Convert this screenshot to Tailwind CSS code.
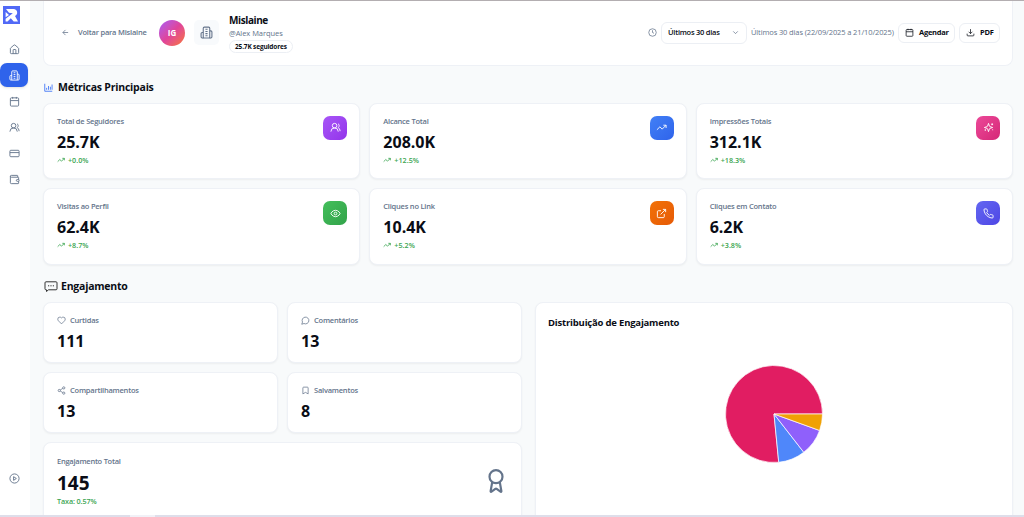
<!DOCTYPE html>
<html lang="pt-BR">
<head>
  <meta charset="UTF-8">
  <meta name="viewport" content="width=device-width, initial-scale=1.0">
  <title>Métricas</title>
  <script src="https://cdn.jsdelivr.net/npm/@tailwindcss/browser@4"></script>
</head>
<body class="relative flex h-[517px] w-[1024px] overflow-hidden bg-[#f8fafb] font-['Open_Sans','Noto_Sans',sans-serif] text-[#0a0d16]">

  <!-- icon sprite -->
  <svg class="hidden">
    <symbol id="home" viewBox="0 0 24 24"><path d="M15 21v-8a1 1 0 0 0-1-1h-4a1 1 0 0 0-1 1v8"/><path d="M3 10a2 2 0 0 1 .709-1.528l7-5.999a2 2 0 0 1 2.582 0l7 5.999A2 2 0 0 1 21 10v9a2 2 0 0 1-2 2H5a2 2 0 0 1-2-2z"/></symbol>
    <symbol id="building" viewBox="0 0 24 24"><path d="M6 22V4a2 2 0 0 1 2-2h8a2 2 0 0 1 2 2v18Z"/><path d="M6 12H4a2 2 0 0 0-2 2v6a2 2 0 0 0 2 2h2"/><path d="M18 9h2a2 2 0 0 1 2 2v9a2 2 0 0 1-2 2h-2"/><path d="M10 6h4M10 10h4M10 14h4M10 18h4"/></symbol>
    <symbol id="calendar" viewBox="0 0 24 24"><path d="M8 2v4M16 2v4M3 10h18"/><rect width="18" height="18" x="3" y="4" rx="2"/></symbol>
    <symbol id="users" viewBox="0 0 24 24"><path d="M18 21a8 8 0 0 0-16 0"/><circle cx="10" cy="8" r="5"/><path d="M22 20c0-3.37-2-6.5-4-8a5 5 0 0 0-.45-8.3"/></symbol>
    <symbol id="card" viewBox="0 0 24 24"><rect width="20" height="14" x="2" y="5" rx="2"/><path d="M2 10h20"/></symbol>
    <symbol id="wallet" viewBox="0 0 24 24"><path d="M19 7V4a1 1 0 0 0-1-1H5a2 2 0 0 0 0 4h15a1 1 0 0 1 1 1v4h-3a2 2 0 0 0 0 4h3a1 1 0 0 0 1-1v-2a1 1 0 0 0-1-1"/><path d="M3 5v14a2 2 0 0 0 2 2h15a1 1 0 0 0 1-1v-4"/></symbol>
    <symbol id="play" viewBox="0 0 24 24"><circle cx="12" cy="12" r="10"/><path d="m10 8 6 4-6 4z"/></symbol>
    <symbol id="arrow-left" viewBox="0 0 24 24"><path d="m12 19-7-7 7-7M19 12H5"/></symbol>
    <symbol id="clock" viewBox="0 0 24 24"><circle cx="12" cy="12" r="10"/><path d="M12 6v6l4 2"/></symbol>
    <symbol id="chevron" viewBox="0 0 24 24"><path d="m6 9 6 6 6-6"/></symbol>
    <symbol id="download" viewBox="0 0 24 24"><path d="M21 15v4a2 2 0 0 1-2 2H5a2 2 0 0 1-2-2v-4M7 10l5 5 5-5M12 15V3"/></symbol>
    <symbol id="chart" viewBox="0 0 24 24"><path d="M2 2v20h20M7 18v-5M12 18V8M17 18v-8M21.500 18V4"/></symbol>
    <symbol id="trend" viewBox="0 0 24 24"><path d="m22 7-8.500 8.500-5-5L2 17"/><path d="M16 7h6v6"/></symbol>
    <symbol id="sparkles" viewBox="0 0 24 24"><path d="m12 3-1.912 5.813a2 2 0 0 1-1.275 1.275L3 12l5.813 1.912a2 2 0 0 1 1.275 1.275L12 21l1.912-5.813a2 2 0 0 1 1.275-1.275L21 12l-5.813-1.912a2 2 0 0 1-1.275-1.275L12 3Z"/><path d="M5 16v3M20 3v4M18 5h4M4 17.500h2M21 16v2"/></symbol>
    <symbol id="eye" viewBox="0 0 24 24"><path d="M2 12s3-7 10-7 10 7 10 7-3 7-10 7-10-7-10-7Z"/><circle cx="12" cy="12" r="3"/></symbol>
    <symbol id="external" viewBox="0 0 24 24"><path d="M15 3h6v6M10 14 21 3M18 13v6a2 2 0 0 1-2 2H5a2 2 0 0 1-2-2V8a2 2 0 0 1 2-2h6"/></symbol>
    <symbol id="phone" viewBox="0 0 24 24"><path d="M22 16.920v3a2 2 0 0 1-2.180 2 19.790 19.790 0 0 1-8.630-3.070 19.500 19.500 0 0 1-6-6 19.790 19.790 0 0 1-3.070-8.670A2 2 0 0 1 4.110 2h3a2 2 0 0 1 2 1.720 12.840 12.840 0 0 0 .7 2.810 2 2 0 0 1-.45 2.110L8.090 9.910a16 16 0 0 0 6 6l1.270-1.270a2 2 0 0 1 2.110-.45 12.840 12.840 0 0 0 2.810.7A2 2 0 0 1 22 16.920z"/></symbol>
    <symbol id="heart" viewBox="0 0 24 24"><path d="M19 14c1.490-1.460 3-3.210 3-5.500A5.500 5.500 0 0 0 16.500 3c-1.760 0-3 .5-4.500 2-1.500-1.500-2.740-2-4.500-2A5.500 5.500 0 0 0 2 8.500c0 2.300 1.500 4.050 3 5.500l7 7Z"/></symbol>
    <symbol id="comment" viewBox="0 0 24 24"><path d="M7.900 20A9 9 0 1 0 4 16.100L2 22Z"/></symbol>
    <symbol id="share" viewBox="0 0 24 24"><circle cx="18" cy="5" r="3"/><circle cx="6" cy="12" r="3"/><circle cx="18" cy="19" r="3"/><path d="m8.590 13.510 6.830 3.980M15.410 6.510l-6.820 3.980"/></symbol>
    <symbol id="bookmark" viewBox="0 0 24 24"><path d="m19 21-7-4-7 4V5a2 2 0 0 1 2-2h10a2 2 0 0 1 2 2v16z"/></symbol>
    <symbol id="award" viewBox="0 0 24 24"><path d="m15.477 12.890 1.515 8.526a.5.5 0 0 1-.81.470l-3.580-2.687a1 1 0 0 0-1.197 0l-3.586 2.686a.5.5 0 0 1-.81-.469l1.514-8.526"/><circle cx="12" cy="8" r="6"/></symbol>
  </svg>

  <aside class="flex w-[30px] shrink-0 flex-col items-start bg-white pt-1.5 pb-[27px] text-[#64748b]">
    <svg class="ml-[3px] h-[18px] w-[17px]" viewBox="0 0 17 18">
      <rect width="17" height="18" fill="#5169f6"/>
      <path d="M3 3h7.500c4.200 0 5 5.500 1.500 7l3 5.500h-4.300L7.800 12.200 4.500 15.500H2.600v-2.700L9.800 7.300 6 6.800z" fill="#fff"/>
      <path d="M2.600 6 6 9l-3.400 2.200z" fill="#fff"/>
    </svg>
    <nav class="mt-[13px] flex w-7 flex-1 flex-col gap-0.5">
      <a class="flex h-6 items-center justify-center"><svg class="size-[11px] fill-none stroke-current stroke-2"><use href="#home"/></svg></a>
      <a class="flex h-6 items-center justify-center rounded-[7px] bg-[#2f63eb] text-white shadow-sm"><svg class="size-[11px] fill-none stroke-current stroke-2"><use href="#building"/></svg></a>
      <a class="flex h-6 items-center justify-center"><svg class="size-[11px] fill-none stroke-current stroke-2"><use href="#calendar"/></svg></a>
      <a class="flex h-6 items-center justify-center"><svg class="size-[11px] fill-none stroke-current stroke-2"><use href="#users"/></svg></a>
      <a class="flex h-6 items-center justify-center"><svg class="size-[11px] fill-none stroke-current stroke-2"><use href="#card"/></svg></a>
      <a class="flex h-6 items-center justify-center"><svg class="size-[11px] fill-none stroke-current stroke-2"><use href="#wallet"/></svg></a>
      <a class="mt-auto flex h-6 items-center justify-center"><svg class="size-[11px] fill-none stroke-current stroke-2"><use href="#play"/></svg></a>
    </nav>
  </aside>

  <main class="flex min-w-0 flex-1 flex-col pr-[11px] pl-[13px]">
    <header class="flex h-[66px] shrink-0 items-center rounded-b-lg border border-t-0 border-[#eef1f6] bg-white pr-3 pl-[17px] text-[7.500px]">
      <svg class="size-[9px] fill-none stroke-[#64748b] stroke-2"><use href="#arrow-left"/></svg>
      <span class="ml-2 w-[73px] font-[550] tracking-[-0.2px] whitespace-nowrap text-[#64748b]">Voltar para Mislaine</span>
      <div class="ml-2 flex size-[26px] items-center justify-center rounded-full bg-linear-to-br from-[#a855f7] via-[#e0439a] to-[#f97316] text-[8px] font-bold text-white">IG</div>
      <div class="ml-[9px] flex size-[25px] items-center justify-center rounded-[5px] bg-[#f8fafc]"><svg class="size-[13px] fill-none stroke-[#64748b] stroke-2"><use href="#building"/></svg></div>
      <div class="ml-2.5 flex flex-col items-start pt-0.5">
        <h1 class="text-[10px] leading-[13px] font-bold tracking-[-0.4px]">Mislaine</h1>
        <p class="text-[7.500px] leading-[12px] tracking-[-0.05px] text-[#64748b]">@Alex Marques</p>
        <span class="mt-[1px] flex h-[13px] items-center rounded-full border border-[#eceff4] px-[5px] text-[6.500px] font-bold tracking-[-0.15px] whitespace-nowrap">25.7K seguidores</span>
      </div>
      <svg class="ml-auto size-[9px] fill-none stroke-[#64748b] stroke-2"><use href="#clock"/></svg>
      <div class="ml-1 flex h-[22px] w-[86px] items-center justify-between rounded-md border border-[#eceff4] pr-1.5 pl-1.5 font-[550] tracking-[-0.25px]">Últimos 30 dias<svg class="size-[9px] fill-none stroke-[#64748b] stroke-2"><use href="#chevron"/></svg></div>
      <span class="ml-1 w-[143px] tracking-[-0.12px] whitespace-nowrap text-[#64748b]">Últimos 30 dias (22/09/2025 a 21/10/2025)</span>
      <button class="ml-1 flex h-5 w-[57px] items-center gap-[5px] rounded-md border border-[#eceff4] pl-1.5 font-bold tracking-[-0.25px]"><svg class="size-[9px] fill-none stroke-current stroke-2"><use href="#calendar"/></svg>Agendar</button>
      <button class="ml-1 flex h-5 w-[41px] items-center gap-[5px] rounded-md border border-[#eceff4] pl-1.5 font-bold tracking-[-0.25px]"><svg class="size-[9px] fill-none stroke-current stroke-2"><use href="#download"/></svg>PDF</button>
    </header>

    <h2 class="flex h-[36.500px] shrink-0 items-center gap-[5px] pt-[7px] pl-px text-[10.500px] font-bold tracking-[-0.22px]"><svg class="size-[9px] fill-none stroke-[#4c7df5] stroke-[2.5]"><use href="#chart"/></svg>Métricas Principais</h2>

    <section id="metrics" class="grid shrink-0 grid-cols-3 gap-[9px]"></section>

    <h2 class="flex h-[37px] shrink-0 items-center gap-[3px] pt-[7px] pl-px text-[10.500px] font-bold tracking-[-0.22px]">
      <svg class="h-[11px] w-3.5 fill-none stroke-[#333] stroke-1" viewBox="0 0 14 11"><path d="M2 .8h10a1 1 0 0 1 1 1v6a1 1 0 0 1-1 1H4.500L2.500 10.500V8.800H2a1 1 0 0 1-1-1v-6a1 1 0 0 1 1-1z"/><path d="M4 4.800h1.200M6.400 4.800h1.200M8.800 4.800h1.200"/></svg>Engajamento
    </h2>

    <section class="grid grid-cols-[479px_478px] gap-[13px]">
      <div id="engagement" class="grid grid-cols-2 content-start gap-[9px]">
        <div class="order-last col-span-2 flex h-[84px] justify-between rounded-lg border border-[#eef1f6] bg-white py-3 pr-3 pl-[13px] shadow-xs">
          <div>
            <p class="mt-px text-[7.500px] leading-[11px] font-[550] tracking-[-0.25px] text-[#64748b]">Engajamento Total</p>
            <p class="mt-1 text-[19px] leading-6 font-bold">145</p>
            <p class="mt-px text-[7.200px] leading-[11px] font-[550] tracking-[-0.1px] text-[#3ba551]">Taxa: 0.57%</p>
          </div>
          <svg class="mt-[13px] size-[26px] fill-none stroke-[#64748b] stroke-2"><use href="#award"/></svg>
        </div>
      </div>
      <div class="h-[240px] rounded-lg border border-[#eef1f6] bg-white px-3 pt-3 shadow-xs">
        <h3 class="text-[9.500px] leading-4 font-bold tracking-[-0.2px]">Distribuição de Engajamento</h3>
        <svg class="mx-auto mt-[34px] block size-[98px]" viewBox="-49 -49 98 98"><g id="pie" stroke="#fff" stroke-width=".7"></g></svg>
      </div>
    </section>
  </main>

  <div class="absolute inset-x-0 top-0 h-px bg-[#b3aeb1]"></div>
  <div class="absolute inset-x-0 bottom-0 h-0.5 bg-[#dedeea]"><div class="ml-[130px] h-full w-[25px] bg-[#f1f1f7]"></div></div>

  <script>
    const metrics = [
      ['Total de Seguidores', '25.7K', '+0.0%', 'users', 'from-[#a855f7] to-[#9333ea]'],
      ['Alcance Total', '208.0K', '+12.5%', 'trend', 'from-[#4280f6] to-[#2f63eb]'],
      ['Impressões Totais', '312.1K', '+18.3%', 'sparkles', 'from-[#ec4899] to-[#d52777]'],
      ['Visitas ao Perfil', '62.4K', '+8.7%', 'eye', 'from-[#44bf5b] to-[#32a34a]'],
      ['Cliques no Link', '10.4K', '+5.2%', 'external', 'from-[#f27208] to-[#e65a06]'],
      ['Cliques em Contato', '6.2K', '+3.8%', 'phone', 'from-[#6366f1] to-[#4f46e5]'],
    ];
    document.getElementById('metrics').innerHTML = metrics.map(([label, value, change, icon, tint]) => `
      <div class="flex h-[76.500px] justify-between rounded-lg border border-[#eef1f6] bg-white py-3 pr-3 pl-[13px] shadow-xs">
        <div>
          <p class="text-[7.500px] leading-[11px] font-[550] tracking-[-0.22px] text-[#64748b]">${label}</p>
          <p class="mt-[5px] text-[16px] leading-[21px] font-bold">${value}</p>
          <p class="mt-0.5 flex items-center gap-[3px] text-[7.200px] leading-[10px] font-[550] text-[#3ba551]"><svg class="size-2 fill-none stroke-current stroke-[2.5]"><use href="#trend"/></svg>${change}</p>
        </div>
        <div class="flex size-6 items-center justify-center rounded-[7px] bg-linear-to-br ${tint}"><svg class="size-[11px] fill-none stroke-white stroke-2"><use href="#${icon}"/></svg></div>
      </div>`).join('');

    const engagement = [
      ['Curtidas', 111, 'heart'],
      ['Comentários', 13, 'comment'],
      ['Compartilhamentos', 13, 'share'],
      ['Salvamentos', 8, 'bookmark'],
    ];
    document.getElementById('engagement').insertAdjacentHTML('beforeend', engagement.map(([label, value, icon]) => `
      <div class="h-[61px] rounded-lg border border-[#eef1f6] bg-white py-3 pr-3 pl-[13px] shadow-xs">
        <p class="flex items-center gap-1 text-[7.500px] leading-[11px] font-[550] tracking-[-0.22px] text-[#64748b]"><svg class="size-[9px] fill-none stroke-current stroke-2"><use href="#${icon}"/></svg>${label}</p>
        <p class="mt-[5px] text-[16px] leading-[21px] font-bold">${value}</p>
      </div>`).join(''));

    // slices run counter-clockwise from 3 o'clock
    const colors = ['#e11d62', '#4f87fa', '#8f60fb', '#f0a105'];
    let angle = 0;
    document.getElementById('pie').innerHTML = engagement.map(([, value], i) => {
      const next = angle + value / 145 * Math.PI * 2;
      const pt = (a) => `${48.500 * Math.cos(a)} ${-48.500 * Math.sin(a)}`;
      const d = `M0 0L${pt(angle)}A48.500 48.500 0 ${next - angle > Math.PI ? 1 : 0} 0 ${pt(next)}Z`;
      angle = next;
      return `<path d="${d}" fill="${colors[i]}"/>`;
    }).join('');
  </script>
</body>
</html>
